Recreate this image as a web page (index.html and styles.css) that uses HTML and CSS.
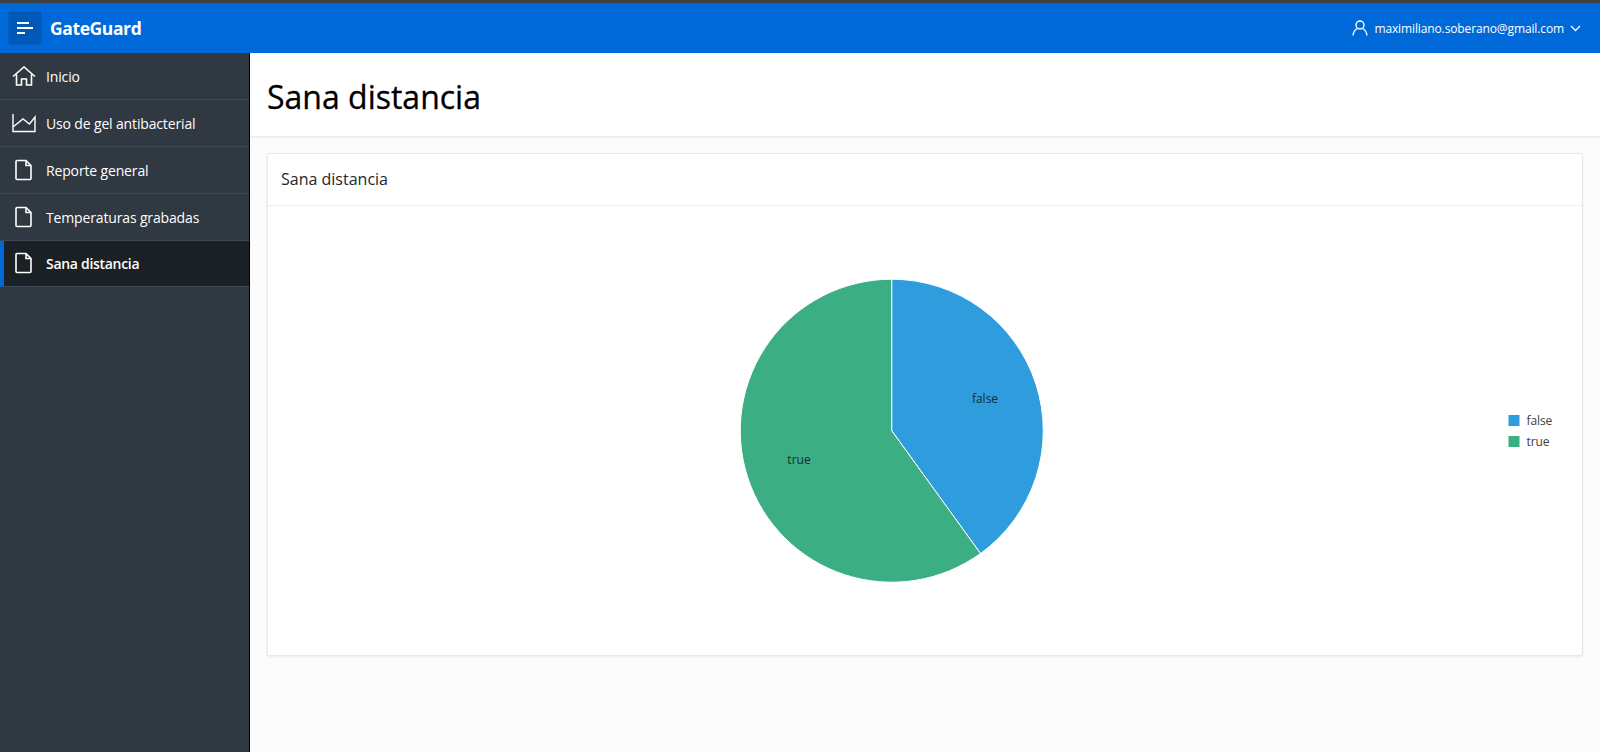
FILE: index.html
```html
<!DOCTYPE html>
<html lang="es">
<head>
  <meta charset="UTF-8">
  <meta name="viewport" content="width=device-width, initial-scale=1.0">
  <title>GateGuard - Sana distancia</title>
  <link rel="stylesheet" href="styles.css">
</head>
<body>

  <header class="topbar">
    <button class="menu-toggle" type="button" aria-label="Menu">
      <svg width="18" height="14" viewBox="0 0 18 14"><path d="M1 2h12M1 7h16M1 12h8" stroke="#fff" stroke-width="2" fill="none"/></svg>
    </button>
    <div class="brand">GateGuard</div>
    <div class="user-menu">
      <svg class="user-icon" width="16" height="16" viewBox="0 0 16 16" fill="none" stroke="#fff" stroke-width="1.4"><circle cx="8" cy="5" r="4"/><path d="M1 15.5c.4-3.4 2.5-6 4.4-7M15 15.5c-.4-3.4-2.5-6-4.4-7"/></svg>
      <span>maximiliano.soberano@gmail.com</span>
      <svg class="chevron" width="11" height="7" viewBox="0 0 11 7" fill="none" stroke="#fff" stroke-width="1.3"><path d="M1 1l4.5 4.5L10 1"/></svg>
    </div>
  </header>

  <div class="layout">
    <nav class="sidebar">
      <a class="nav-item" href="#">
        <svg class="nav-icon" width="24" height="20" viewBox="0 0 24 20" fill="none" stroke="#fff" stroke-width="1.6"><path d="M1 10.500L12 1l11 9.500M4.500 8.500V19h5v-6h5v6h5V8.500"/></svg>
        <span class="nav-label">Inicio</span>
      </a>
      <a class="nav-item" href="#">
        <svg class="nav-icon" width="24" height="20" viewBox="0 0 24 20" fill="none" stroke="#fff" stroke-width="1.4"><path d="M1 1v17.500h22V4l-5.500 7L11 6l-10 8"/></svg>
        <span class="nav-label">Uso de gel antibacterial</span>
      </a>
      <a class="nav-item" href="#">
        <svg class="nav-icon" width="24" height="22" viewBox="0 0 24 22" fill="none" stroke="#fff" stroke-width="1.6"><path d="M5 1.500h9l5 5v13a1 1 0 0 1-1 1H5a1 1 0 0 1-1-1v-17a1 1 0 0 1 1-1zM14 1.500v5h5"/></svg>
        <span class="nav-label">Reporte general</span>
      </a>
      <a class="nav-item" href="#">
        <svg class="nav-icon" width="24" height="22" viewBox="0 0 24 22" fill="none" stroke="#fff" stroke-width="1.6"><path d="M5 1.500h9l5 5v13a1 1 0 0 1-1 1H5a1 1 0 0 1-1-1v-17a1 1 0 0 1 1-1zM14 1.500v5h5"/></svg>
        <span class="nav-label">Temperaturas grabadas</span>
      </a>
      <a class="nav-item active" href="#">
        <svg class="nav-icon" width="24" height="22" viewBox="0 0 24 22" fill="none" stroke="#fff" stroke-width="1.6"><path d="M5 1.500h9l5 5v13a1 1 0 0 1-1 1H5a1 1 0 0 1-1-1v-17a1 1 0 0 1 1-1zM14 1.500v5h5"/></svg>
        <span class="nav-label">Sana distancia</span>
      </a>
    </nav>

    <main class="content">
      <div class="page-title">
        <h1>Sana distancia</h1>
      </div>
      <section class="card">
        <h2 class="card-title">Sana distancia</h2>
        <div class="card-body">
          <svg class="chart" width="1314" height="449" viewBox="268 206 1314 449">
            <path d="M891.700 430.700V279.200A151.500 151.500 0 0 1 980.500 553.500Z" fill="#2f9ddd" stroke="#fff" stroke-width="1"/>
            <path d="M891.700 430.700L980.500 553.500A151.500 151.500 0 1 1 891.700 279.200Z" fill="#3cae84" stroke="#fff" stroke-width="1"/>
            <text class="slice-label" x="985" y="403" text-anchor="middle">false</text>
            <text class="slice-label" x="799" y="464" text-anchor="middle">true</text>
            <rect x="1508.500" y="415" width="11" height="11" fill="#2f9ddd"/>
            <text class="legend-label" x="1526.500" y="424.500">false</text>
            <rect x="1508.500" y="436" width="11" height="11" fill="#3cae84"/>
            <text class="legend-label" x="1526.500" y="446">true</text>
          </svg>
        </div>
      </section>
    </main>
  </div>

</body>
</html>
```

FILE: styles.css
```css
* {
  box-sizing: border-box;
}

html, body {
  height: 100%;
}

body {
  margin: 0;
  background-color: #fcfcfc;
  font-family: 'Open Sans', sans-serif;
  overflow: hidden;
}

.topbar {
  height: 53px;
  border-top: 3px solid #404040;
  background-color: #0069d9;
  color: #fff;
  display: flex;
  align-items: center;
  padding: 0 19px 0 8px;
}

.menu-toggle {
  width: 34px;
  height: 34px;
  margin-top: -1px;
  border: 1px solid #0060c4;
  border-radius: 2px;
  background-color: #0059b8;
  display: flex;
  align-items: center;
  justify-content: center;
  padding: 0;
}

.brand {
  margin-left: 8px;
  font-size: 17.500px;
  font-weight: 700;
  letter-spacing: -0.4px;
}

.user-menu {
  margin-left: auto;
  display: flex;
  align-items: center;
  font-size: 12px;
  letter-spacing: -0.12px;
}

.user-icon {
  margin-right: 6px;
}

.chevron {
  margin-left: 6px;
}

.layout {
  display: flex;
  height: 699px;
}

.sidebar {
  width: 250px;
  flex-shrink: 0;
  background-color: #303841;
  border-right: 1px solid #000;
}

.nav-item {
  height: 46.880px;
  display: flex;
  align-items: center;
  padding-left: 12px;
  border-bottom: 1px solid #404a54;
  color: #fff;
  font-size: 14px;
  letter-spacing: -0.15px;
  text-decoration: none;
}

.nav-icon {
  margin-right: 10px;
}

.nav-label {
  padding-top: 1px;
}

.nav-item.active {
  background-color: #1b2025;
  border-left: 4px solid #0069d9;
  padding-left: 8px;
  font-weight: 600;
  letter-spacing: -0.3px;
}

.content {
  flex: 1;
  min-width: 0;
}

.page-title {
  height: 85px;
  background-color: #fff;
  border-bottom: 2px solid #efefef;
  display: flex;
  align-items: center;
  padding: 4px 0 0 17px;
}

.page-title h1 {
  margin: 0;
  font-size: 32px;
  font-weight: 500;
  -webkit-text-stroke: 0.3px #000;
  color: #000;
}

.card {
  margin: 15px 17px 0 17px;
  height: 503px;
  background-color: #fff;
  border: 1px solid #e8e8e8;
  border-radius: 2px;
  box-shadow: 0 1px 3px rgba(0, 0, 0, 0.08);
}

.card-title {
  margin: 0;
  height: 52px;
  display: flex;
  align-items: center;
  padding: 0 0 1px 13px;
  border-bottom: 1px solid #eeeeee;
  font-size: 16px;
  font-weight: 500;
  color: #262626;
}

.chart {
  display: block;
}

.slice-label {
  font-size: 12px;
  fill: #1a2b33;
}

.legend-label {
  font-size: 12px;
  letter-spacing: -0.1px;
  fill: #404040;
}
```
